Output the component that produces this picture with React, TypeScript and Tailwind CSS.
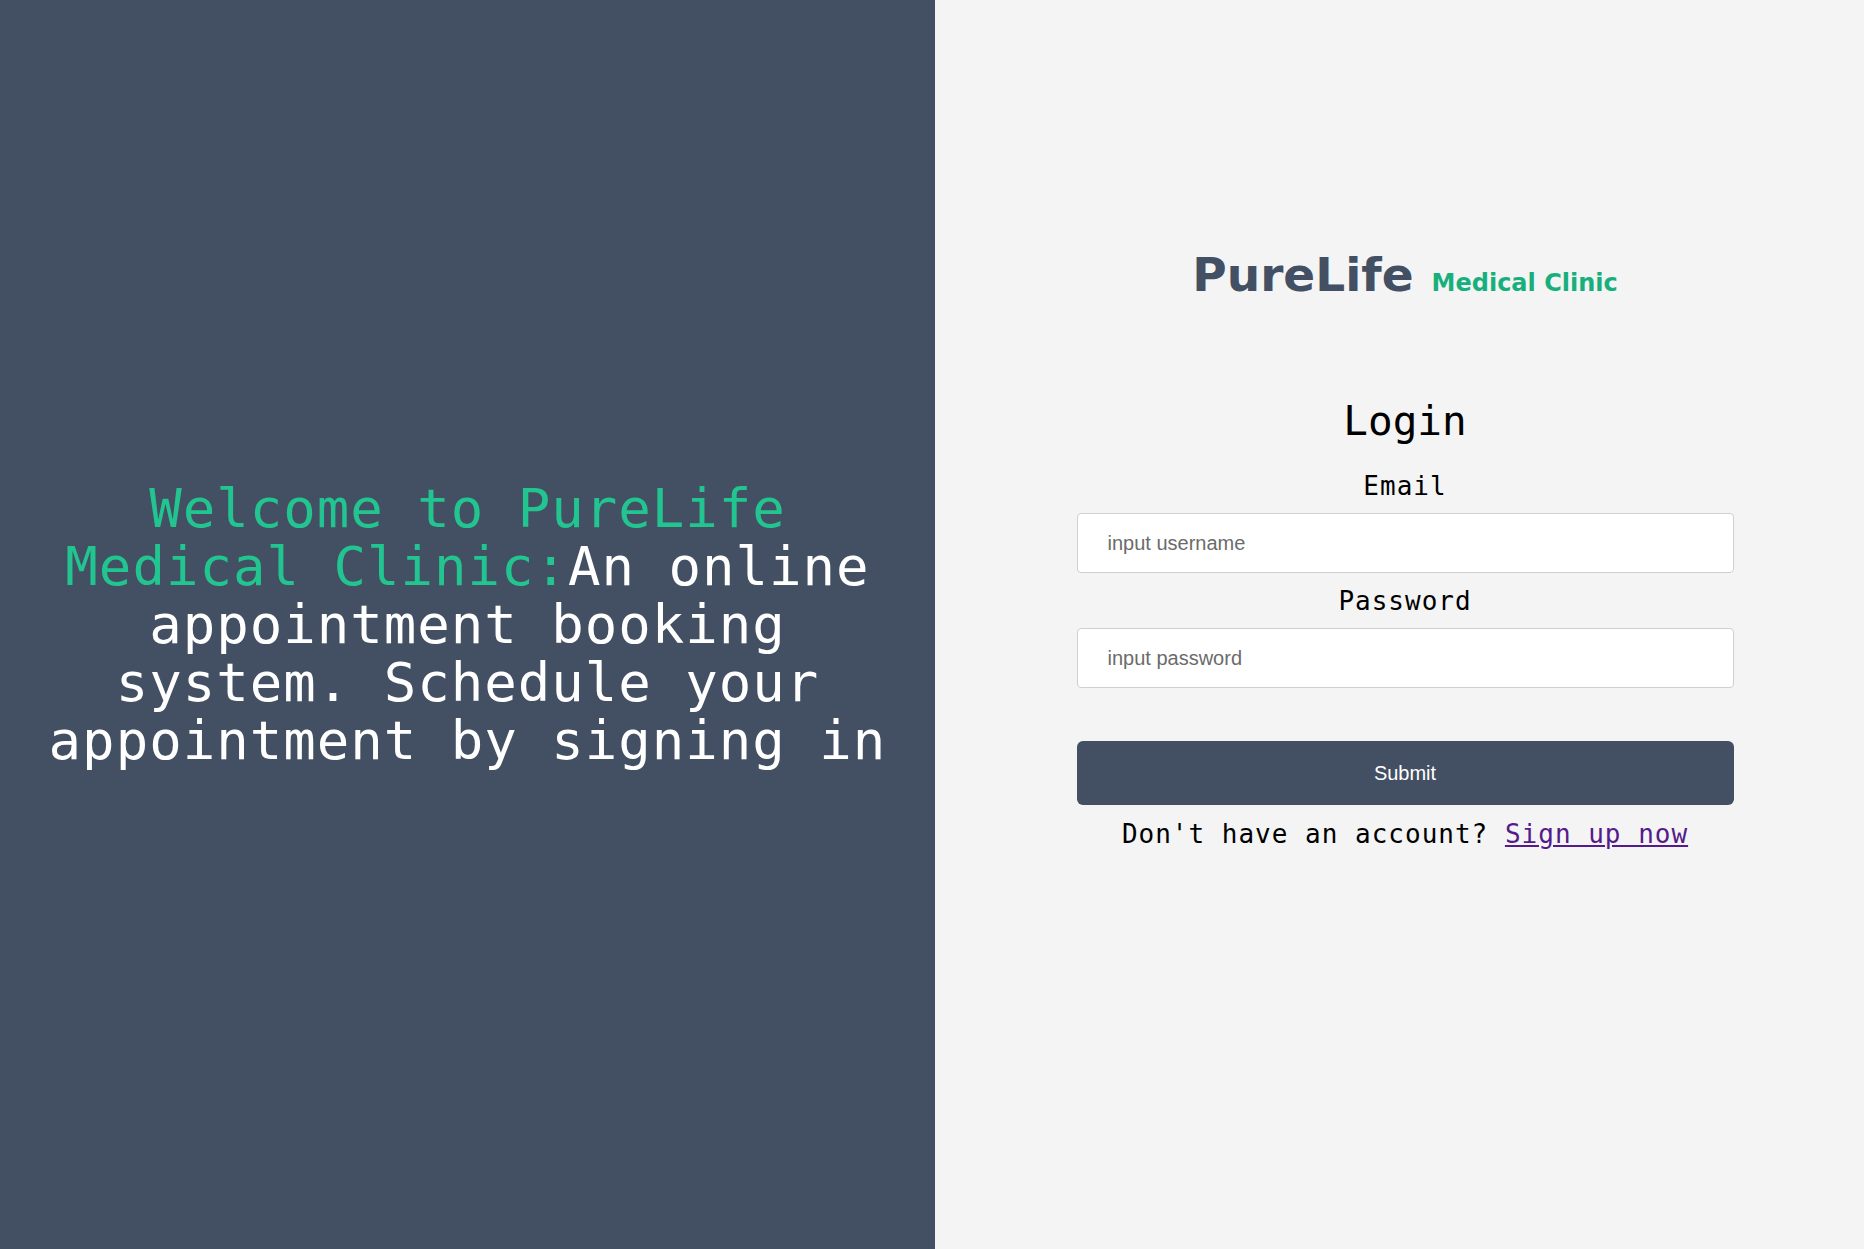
import { useState } from 'react';

const mono = 'font-["DejaVu_Sans_Mono","Liberation_Mono",monospace]';

export default function LoginPage() {
  const [email, setEmail] = useState('');
  const [password, setPassword] = useState('');

  return (
    <div className="flex min-h-screen w-full">
      {/* Intro side */}
      <div className="flex w-[935px] shrink-0 items-center justify-center bg-[#434f63] px-8">
        <h1
          className={`${mono} text-center text-[54px] leading-[58px] tracking-[1px] font-normal text-white`}
        >
          <span className="text-[#22c58f]">Welcome to PureLife Medical Clinic:</span>
          An online appointment booking system. Schedule your appointment by signing in
        </h1>
      </div>

      {/* Login side */}
      <div className="flex flex-1 flex-col items-center bg-[#f4f4f4] pl-[11px] pt-[251px]">
        <div className="flex items-baseline gap-[18px] font-['DejaVu_Sans',Verdana,sans-serif] font-bold leading-none">
          <span className="text-[47px] text-[#434f63]">PureLife</span>
          <span className="text-[24px] text-[#17b07c]">Medical Clinic</span>
        </div>

        <form className="mt-[103px] flex w-[657px] flex-col items-center" onSubmit={(e) => e.preventDefault()}>
          <h2 className={`${mono} text-[41px] leading-none text-black`}>Login</h2>

          <label className={`${mono} mt-[31px] text-[26px] leading-none tracking-[1px] text-black`}>
            Email
          </label>
          <input
            type="text"
            value={email}
            onChange={(e) => setEmail(e.target.value)}
            placeholder="input username"
            className="mt-[14px] h-[60px] w-full rounded-[4px] border border-[#cfcfcf] bg-white px-[30px] font-['Liberation_Sans',Arial,sans-serif] text-[20px] text-black outline-none placeholder:text-[#6b6b6b]"
          />

          <label className={`${mono} mt-[15px] text-[26px] leading-none tracking-[1px] text-black`}>
            Password
          </label>
          <input
            type="password"
            value={password}
            onChange={(e) => setPassword(e.target.value)}
            placeholder="input password"
            className="mt-[14px] h-[60px] w-full rounded-[4px] border border-[#cfcfcf] bg-white px-[30px] font-['Liberation_Sans',Arial,sans-serif] text-[20px] text-black outline-none placeholder:text-[#6b6b6b]"
          />

          <button
            type="submit"
            className="mt-[53px] h-[64px] w-full rounded-[6px] bg-[#434f63] font-['Liberation_Sans',Arial,sans-serif] text-[20px] text-white"
          >
            Submit
          </button>

          <p className={`${mono} mt-[16px] text-[26px] leading-none tracking-[1px] text-black`}>
            Don't have an account?{' '}
            <a href="#signup" className="text-[#551a8b] underline">
              Sign up now
            </a>
          </p>
        </form>
      </div>
    </div>
  );
}
